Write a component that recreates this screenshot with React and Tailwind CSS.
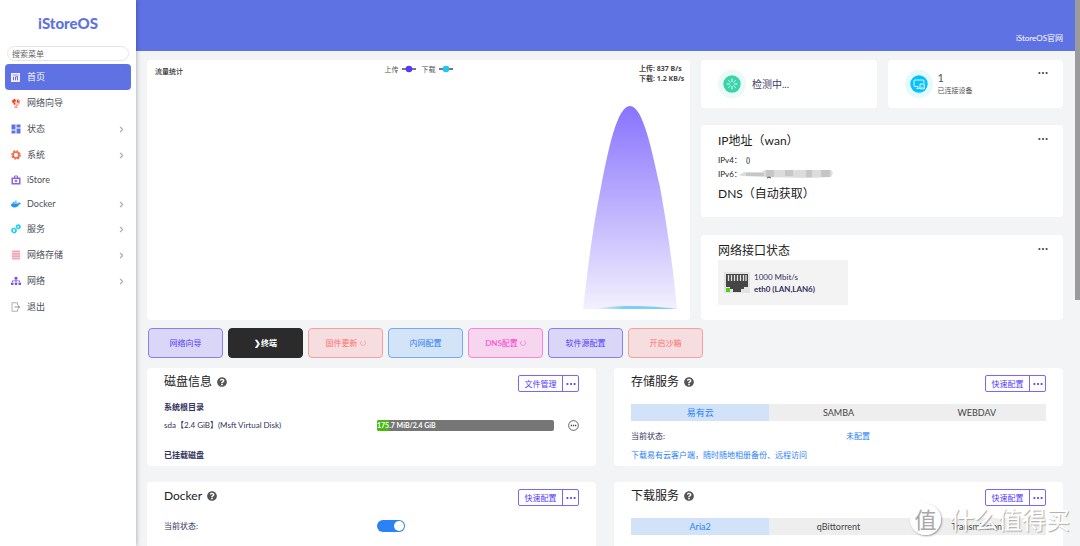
import React, { useState } from 'react';
import { FaDocker, FaSitemap, FaQuestionCircle } from 'react-icons/fa';
import { MdDashboard } from 'react-icons/md';
import { ChevronRight } from 'lucide-react';

const HomeIcon = () => (
  <svg viewBox="0 0 18 18" className="w-[9px] h-[9px]">
    <rect width="18" height="18" fill="#f1effc" />
    <path d="M3 4h12" stroke="#8e86e0" strokeWidth="1.6" />
    <path d="M5 7.5v7M9 14.5v-7h5M13 7.5v7" fill="none" stroke="#5e62d8" strokeWidth="1.8" />
  </svg>
);

const GuideIcon = () => (
  <svg viewBox="0 0 20 20" className="w-[10px] h-[10px]">
    <circle cx="9" cy="8" r="6.5" fill="#fb6340" fillOpacity="0.25" />
    <path d="M3 4l4-2 3 2-1 3-3 1 3 2-1 4-2-1-1-3-3-2z" fill="#f5401b" />
    <path d="M12 3l3 2 1 4-3 1-1-3z" fill="#f5401b" />
    <path d="M14 1.5c5 4 3 13-4 13.5M10 15v3M6.5 18.5h7" fill="none" stroke="#fb6340" strokeWidth="1.6" />
  </svg>
);

const SystemIcon = () => (
  <svg viewBox="0 0 20 20" className="w-[10px] h-[10px]" fill="none" stroke="#fb6340">
    <circle cx="10" cy="10" r="6" strokeWidth="3.4" />
    <circle cx="10" cy="10" r="8.4" strokeWidth="2.6" strokeDasharray="3.6 3" />
  </svg>
);

const StoreIcon = () => (
  <svg viewBox="0 0 20 20" className="w-[10px] h-[10px]" fill="none" stroke="#8965e0">
    <path d="M7 6V2h6v4" strokeWidth="2" />
    <rect x="2.5" y="6.5" width="15" height="11" strokeWidth="3" />
    <circle cx="10" cy="12" r="2.2" fill="#8965e0" />
  </svg>
);

const ServiceIcon = () => (
  <svg viewBox="0 0 20 20" className="w-[10px] h-[10px]" fill="none" stroke="#11cdef">
    <circle cx="6" cy="13" r="3.8" strokeWidth="2.8" />
    <circle cx="6" cy="13" r="5.2" strokeWidth="1.6" strokeDasharray="2 2" />
    <circle cx="14.5" cy="5.5" r="3.2" strokeWidth="2.8" />
    <circle cx="14.5" cy="5.5" r="4.6" strokeWidth="1.4" strokeDasharray="2 2" />
  </svg>
);

const StorageIcon = () => (
  <svg viewBox="0 0 20 20" className="w-[10px] h-[10px]" fill="#f3a4b5">
    <rect x="1.5" y="1" width="17" height="4" rx="1.5" />
    <rect x="1.5" y="5.8" width="17" height="3.8" rx="1" />
    <rect x="1.5" y="10.4" width="17" height="3.8" rx="1" />
    <rect x="1.5" y="15" width="17" height="4" rx="1.5" />
  </svg>
);

const LogoutIcon = () => (
  <svg viewBox="0 0 20 20" className="w-[10px] h-[10px]" fill="none" stroke="#a0a8b0" strokeWidth="1.8">
    <path d="M13 6V1.5H2v17h11V14" />
    <path d="M7 10h8" strokeWidth="2.4" />
    <path d="M14 5.5l5 4.5-5 4.5z" fill="#a0a8b0" stroke="none" />
  </svg>
);

const Dots = ({ className = '' }) => (
  <svg viewBox="0 0 10 4" className={`w-[10px] h-[4px] ${className}`} fill="currentColor">
    <circle cx="1.4" cy="2" r="1.1" />
    <circle cx="5" cy="2" r="1.1" />
    <circle cx="8.6" cy="2" r="1.1" />
  </svg>
);

const menu = [
  { label: '首页', icon: <HomeIcon />, active: true },
  { label: '网络向导', icon: <GuideIcon /> },
  { label: '状态', icon: <MdDashboard className="w-[12px] h-[12px] -ml-px text-[#5e72e4]" />, sub: true },
  { label: '系统', icon: <SystemIcon />, sub: true },
  { label: 'iStore', icon: <StoreIcon />, short: true },
  { label: 'Docker', icon: <FaDocker className="w-[10px] h-[10px] text-[#2496ed]" />, sub: true, short: true },
  { label: '服务', icon: <ServiceIcon />, sub: true },
  { label: '网络存储', icon: <StorageIcon />, sub: true },
  { label: '网络', icon: <FaSitemap className="w-[10px] h-[10px] text-[#7a4ee0]" />, sub: true },
  { label: '退出', icon: <LogoutIcon /> },
];

const actions = [
  { label: '网络向导', style: 'bg-[#dad6f7] border-[#8e7cf5] text-[#553afe]' },
  { label: '❯终端', style: 'bg-[#2b2b2b] border-[#2b2b2b] text-white font-bold' },
  { label: '固件更新', style: 'bg-[#f6dde0] border-[#f99f9f] text-[#ff6f6a]', loading: true },
  { label: '内网配置', style: 'bg-[#d3e3f8] border-[#74abf8] text-[#2a82f6]' },
  { label: 'DNS配置', style: 'bg-[#f6d6ef] border-[#fa83dc] text-[#fb3bc5]', loading: true },
  { label: '软件源配置', style: 'bg-[#dad6f7] border-[#8e7cf5] text-[#553afe]' },
  { label: '开启沙箱', style: 'bg-[#f6dde0] border-[#f99f9f] text-[#ff6f6a]' },
];

function Sidebar() {
  return (
    <aside className="w-[136px] shrink-0 bg-white px-[5px] shadow-[0_0_5px_rgba(0,0,0,0.35)] z-10">
      <h1 className="h-[46px] flex items-center justify-center text-[15px] leading-4 font-black text-[#5e72e4] font-['Lato',sans-serif]">
        iStoreOS
      </h1>
      <input
        type="text"
        aria-label="搜索菜单"
        placeholder="搜索菜单"
        className="block mx-[2px] w-[122px] h-[15px] px-[4px] rounded-full border border-[#e4e6ea] text-[8px] leading-3 placeholder-[#666] outline-none"
      />
      <nav className="pt-[3px]">
        {menu.map((m) => (
          <a
            key={m.label}
            href="#"
            className={`flex items-center w-[126px] pl-[6px] pr-[5px] rounded-[4px] text-[9px] leading-3 ${m.short ? 'h-[24px]' : 'h-[26px]'} ${m.active ? 'bg-[#5e72e4] text-white' : 'text-[#4b4f58]'}`}
          >
            <span className="w-[16px] flex items-center [&>svg]:shrink-0">{m.icon}</span>
            <span className="flex-1">{m.label}</span>
            {m.sub && <ChevronRight className="w-[9px] h-[9px] text-[#a9adb5]" strokeWidth={3} />}
          </a>
        ))}
      </nav>
    </aside>
  );
}

function TrafficCard() {
  return (
    <section className="bg-white rounded-[4px] flex flex-col px-[8px] pt-[4px] pb-[11px]">
      <div className="grid grid-cols-[1fr_auto_1fr] items-start text-[7px] leading-[10px] text-[#333]">
        <h2 className="pt-[2px] font-medium">流量统计</h2>
        <div className="flex gap-[6px] text-[#555]">
          <Legend label="上传" color="#553afe" />
          <Legend label="下载" color="#1fc3f7" />
        </div>
        <div className="justify-self-end w-[43px] font-bold whitespace-nowrap text-[#444] font-['Noto_Sans','Noto_Sans_CJK_SC',sans-serif]">
          <p>上传: 837 B/s</p>
          <p>下载: 1.2 KB/s</p>
        </div>
      </div>
      <div className="flex-1 flex justify-end items-end pr-[4px]">
        <svg viewBox="0 0 95 203" className="w-[95px] h-[203px]">
          <defs>
            <linearGradient id="up" x1="0" y1="0" x2="0" y2="1">
              <stop offset="0" stopColor="#8873fe" />
              <stop offset="1" stopColor="#f3f0fe" />
            </linearGradient>
            <linearGradient id="down" x1="0" y1="0" x2="1" y2="0">
              <stop offset="0" stopColor="#7dcdfa" stopOpacity="0" />
              <stop offset="0.35" stopColor="#7dcdfa" />
              <stop offset="1" stopColor="#7dcdfa" />
            </linearGradient>
          </defs>
          <path d="M0 203C5 160 10 120 18 81C25 45 34 0 47 0C60 0 69 45 77 81C84 120 90 160 94 203Z" fill="url(#up)" />
          <path d="M12 203C22 201 32 200 47 200C65 200 80 201 94 203Z" fill="url(#down)" />
        </svg>
      </div>
    </section>
  );
}

function Legend({ label, color }) {
  return (
    <span className="flex items-center gap-[3px]">
      {label}
      <svg viewBox="0 0 14 8" className="w-[14px] h-[8px]">
        <path d="M0 4h14" stroke="#555" strokeWidth="1.6" />
        <circle cx="7" cy="4" r="3.3" fill={color} />
      </svg>
    </span>
  );
}

function StatusColumn() {
  return (
    <div className="flex flex-col">
      <div className="grid grid-cols-2 gap-[11px]">
        <section className="h-[48px] bg-white rounded-[4px] flex items-center pl-[17px] gap-[6px]">
          <span className="w-[28px] h-[28px] rounded-full bg-[#ebfaf6] flex items-center justify-center">
            <svg viewBox="0 0 18 18" className="w-[18px] h-[18px]">
              <circle cx="9" cy="9" r="8.7" fill="#37d5a9" />
              <path
                d="M9 4v2.6M9 11.4V14M4 9h2.6M11.4 9H14M5.5 5.5l1.8 1.8M10.7 10.7l1.8 1.8M5.5 12.5l1.8-1.8M10.7 7.3l1.8-1.8"
                stroke="#fff"
                strokeWidth="0.9"
                strokeLinecap="round"
              />
            </svg>
          </span>
          <p className="text-[10px] leading-3 text-[#404069]">检测中...</p>
        </section>
        <section className="h-[48px] bg-white rounded-[4px] flex items-center pl-[17px] pr-[15px] gap-[5px]">
          <span className="w-[28px] h-[28px] rounded-full bg-[#e6f9ff] flex items-center justify-center">
            <svg viewBox="0 0 18 18" className="w-[18px] h-[18px]">
              <circle cx="9" cy="9" r="8.7" fill="#04c2ff" />
              <path
                d="M8 11.5H5A1 1 0 0 1 4 10.5V6A1 1 0 0 1 5 5h8a1 1 0 0 1 1 1v2M6.5 13.5h3M8 11.5v2M10 9h4.2v4.800H10zM11.5 12.3h1.300"
                fill="none"
                stroke="#fff"
                strokeWidth="0.9"
              />
            </svg>
          </span>
          <div className="flex-1 text-[#555]">
            <p className="text-[11px] leading-3">1</p>
            <p className="text-[7px] leading-3">已连接设备</p>
          </div>
          <MoreButton className="self-start mt-[9px]" />
        </section>
      </div>

      <section className="mt-[17px] h-[92px] bg-white rounded-[4px] pl-[17px] pr-[15px] pt-[8px] flex items-start justify-between">
        <div className="text-[8px] text-[#222]">
          <h2 className="text-[12px] leading-4">IP地址（wan）</h2>
          <p className="mt-[4px] leading-[14px]">
            IPv4： &nbsp;()
          </p>
          <p className="leading-[14px] flex items-center">
            IPv6：
            <MaskedAddress />
          </p>
          <h2 className="mt-[5px] text-[12px] leading-4">DNS（自动获取）</h2>
        </div>
        <MoreButton className="mt-[2px]" />
      </section>

      <section className="mt-[18px] h-[85px] bg-white rounded-[4px] pl-[17px] pr-[15px] pt-[8px] flex items-start justify-between">
        <div>
          <h2 className="text-[12px] leading-4 text-[#222]">网络接口状态</h2>
          <div className="mt-px w-[130px] h-[45px] bg-[#f3f3f3] pl-[6px] flex items-center gap-[4px]">
            <svg viewBox="0 0 26 21" className="w-[26px] h-[21px]">
              <rect width="26" height="21" fill="#e3e3e3" />
              <path d="M2 2h22v13h-4v2h-3v3H9v-3H6v-2H2z" fill="#454545" />
              <path d="M4.5 3v6M7.5 3v6M10.5 3v6M13.5 3v6M16.5 3v6M19.5 3v6M22 3v6" stroke="#e3e3e3" strokeWidth="1.3" />
              <rect x="2" y="16" width="4" height="4" fill="#52d017" />
            </svg>
            <div className="text-[8px] leading-3 text-[#32325d]">
              <p>1000 Mbit/s</p>
              <p className="font-bold">eth0 (LAN,LAN6)</p>
            </div>
          </div>
        </div>
        <MoreButton className="mt-[2px]" />
      </section>
    </div>
  );
}

const MaskedAddress = () => (
  <svg viewBox="0 0 94 10" className="w-[94px] h-[10px] -ml-[3px]">
    <path d="M0 6L5 3 22 3 26 1H92L94 4 92 8 70 9 26 8 3 7z" fill="#dcdcdc" />
    <path d="M7 4h18v3H7zM27 1h8v7h-8zM46 1h8v6h-8zM67 1h6v7h-6zM82 1h9v7h-9z" fill="#c6c6c6" />
    <path d="M28 9q2-2 4 0" stroke="#444" fill="none" />
  </svg>
);

function MoreButton({ className }) {
  return (
    <button type="button" aria-label="更多" className={`flex h-[8px] items-center text-[#444] ${className}`}>
      <Dots />
    </button>
  );
}

function CardHeader({ title, action }) {
  return (
    <div className="flex items-start justify-between h-[17px]">
      <h2 className="flex items-center gap-[5px] text-[12px] leading-[14px] text-[#222]">
        {title}
        <FaQuestionCircle className="w-[10px] h-[10px] text-[#555]" />
      </h2>
      <div className="flex h-[17px] rounded-[2px] border border-[#7a66fb] text-[#553afe] text-[8px] leading-3">
        <button type="button" className="w-[43px] text-center">{action}</button>
        <button type="button" aria-label="更多" className="w-[16px] border-l border-[#7a66fb] flex items-center justify-center">
          <Dots />
        </button>
      </div>
    </div>
  );
}

function Tabs({ items }) {
  const [current, setCurrent] = useState(0);
  return (
    <div role="tablist" className="mt-[12px] grid grid-cols-3 h-[17px] text-[9px] leading-3">
      {items.map((item, i) => (
        <button
          key={item}
          type="button"
          role="tab"
          aria-selected={i === current}
          onClick={() => setCurrent(i)}
          className={i === current ? 'bg-[#d1e2f9] text-[#2a82f6]' : 'bg-[#eeeeee] text-[#444]'}
        >
          {item}
        </button>
      ))}
    </div>
  );
}

function DiskUsage({ used, total, percent }) {
  return (
    <div className="flex h-[11px] rounded-[2px] bg-[#767676] overflow-hidden">
      <div className="bg-[#49b811] text-white text-[7px] leading-[11px] font-bold whitespace-nowrap" style={{ width: `${percent}%` }}>
        {used}/{total}
      </div>
    </div>
  );
}

const cardStyle = 'bg-white rounded-[4px] px-[17px] pt-[7px] text-[8px] leading-3 text-[#32325d]';

function Watermark() {
  return (
    <div className="absolute right-[10px] bottom-[11px] flex items-center gap-[9px] text-white pointer-events-none">
      <span className="w-[31px] h-[31px] rounded-full bg-white/90 shadow-[1px_1px_2px_#999] flex items-center justify-center text-[22px] leading-none text-[#a8a8a8]">
        值
      </span>
      <span className="text-[24px] leading-7 [text-shadow:1px_1px_1px_#aaa]">什么值得买</span>
    </div>
  );
}

export default function App() {
  const [docker, setDocker] = useState(true);

  return (
    <div className="relative flex h-screen overflow-hidden bg-[#f3f4f6] font-['Lato','Noto_Sans_CJK_SC',sans-serif]">
      <Sidebar />

      <div className="flex-1 min-w-0">
        <header className="h-[51px] bg-[#5e72e4] flex justify-end pt-[32px] pr-[12px]">
          <a href="#" className="text-white text-[8px] leading-3">iStoreOS官网</a>
        </header>

        <main className="pl-[11px] pr-[12px] pt-[9px]">
          <div className="grid grid-cols-[3fr_2fr] gap-[11px] h-[260px]">
            <TrafficCard />
            <StatusColumn />
          </div>

          <div className="flex gap-[5px] mt-[8px] pl-px">
            {actions.map((a) => (
              <button
                key={a.label}
                type="button"
                className={`w-[75px] h-[30px] rounded-[4px] border text-[8px] leading-3 flex items-center justify-center gap-[2px] ${a.style}`}
              >
                {a.label}
                {a.loading && (
                  <svg viewBox="0 0 12 12" className="w-[6px] h-[6px] opacity-60" fill="none" stroke="currentColor" strokeWidth="1.6">
                    <path d="M8 1.500A5 5 0 1 1 3 2.200" />
                  </svg>
                )}
              </button>
            ))}
          </div>

          <div className="grid grid-cols-2 gap-x-[18px] gap-y-[16px] mt-[10px]">
            <section className={`${cardStyle} h-[98px]`}>
              <CardHeader title="磁盘信息" action="文件管理" />
              <h3 className="mt-[9px] font-bold">系统根目录</h3>
              <div className="mt-[6px] grid grid-cols-[213fr_177fr_25fr] items-center">
                <span>sda【2.4 GiB】(Msft Virtual Disk)</span>
                <DiskUsage used="175.7 MiB" total="2.4 GiB" percent={7} />
                <button type="button" aria-label="磁盘操作" className="justify-self-end">
                  <svg viewBox="0 0 12 12" className="w-[11px] h-[11px]" fill="none" stroke="#444">
                    <circle cx="6" cy="6" r="5.3" strokeWidth="0.9" />
                    <path d="M3 6h1.4M5.3 6h1.4M7.6 6H9" strokeWidth="1.4" />
                  </svg>
                </button>
              </div>
              <h3 className="mt-[18px] font-bold">已挂载磁盘</h3>
            </section>

            <section className={`${cardStyle} h-[98px]`}>
              <CardHeader title="存储服务" action="快速配置" />
              <Tabs items={['易有云', 'SAMBA', 'WEBDAV']} />
              <div className="mt-[9px] grid grid-cols-[215fr_200fr]">
                <span>当前状态:</span>
                <a href="#" className="text-[#2a82f6]">未配置</a>
              </div>
              <a href="#" className="block mt-[7px] text-[#2a82f6]">下载易有云客户端，随时随地相册备份、远程访问</a>
            </section>

            <section className={`${cardStyle} h-[98px]`}>
              <CardHeader title="Docker" action="快速配置" />
              <div className="mt-[14px] grid grid-cols-[213fr_202fr] items-center">
                <label htmlFor="docker">当前状态:</label>
                <input
                  id="docker"
                  type="checkbox"
                  role="switch"
                  checked={docker}
                  onChange={() => setDocker(!docker)}
                  className="appearance-none w-[28px] h-[12px] rounded-full bg-[#bbb] checked:bg-[#2a82f6] p-px flex checked:justify-end before:block before:w-[10px] before:h-[10px] before:rounded-full before:bg-white"
                />
              </div>
            </section>

            <section className={`${cardStyle} h-[98px]`}>
              <CardHeader title="下载服务" action="快速配置" />
              <Tabs items={['Aria2', 'qBittorrent', 'Transmission']} />
            </section>
          </div>
        </main>
      </div>

      {/* Scroll track */}
      <div className="w-[5px] shrink-0 bg-[#f3f4f6]">
        <div className="h-[55%] bg-[#9b9b9b]" />
      </div>

      <Watermark />
    </div>
  );
}
